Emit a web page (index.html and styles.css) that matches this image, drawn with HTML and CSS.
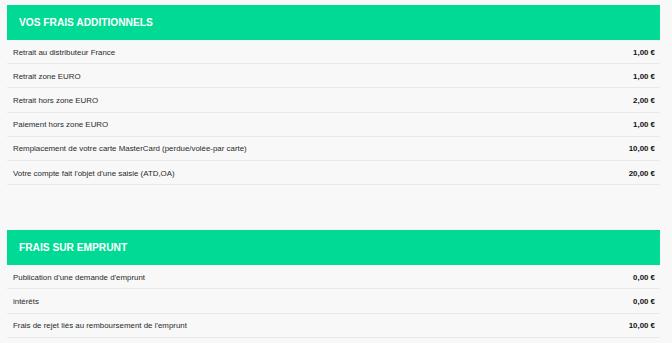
FILE: index.html
```html
<!DOCTYPE html>
<html lang="fr">
<head>
<meta charset="utf-8">
<link rel="stylesheet" href="styles.css">
</head>
<body>
<div class="page">
  <section class="block">
    <h2 class="head">VOS FRAIS ADDITIONNELS</h2>
    <div class="row"><span>Retrait au distributeur France</span><b>1,00 €</b></div>
    <div class="row"><span>Retrait zone EURO</span><b>1,00 €</b></div>
    <div class="row"><span>Retrait hors zone EURO</span><b>2,00 €</b></div>
    <div class="row"><span>Paiement hors zone EURO</span><b>1,00 €</b></div>
    <div class="row"><span>Remplacement de votre carte MasterCard (perdue/volée-par carte)</span><b>10,00 €</b></div>
    <div class="row"><span>Votre compte fait l'objet d'une saisie (ATD,OA)</span><b>20,00 €</b></div>
  </section>
  <section class="block">
    <h2 class="head">FRAIS SUR EMPRUNT</h2>
    <div class="row"><span>Publication d'une demande d'emprunt</span><b>0,00 €</b></div>
    <div class="row"><span>intérêts</span><b>0,00 €</b></div>
    <div class="row"><span>Frais de rejet liés au remboursement de l'emprunt</span><b>10,00 €</b></div>
  </section>
</div>
</body>
</html>
```
FILE: styles.css
```css
html, body {
  margin: 0;
  padding: 0;
  background: #f8f8f8;
}
body {
  font-family: "Liberation Sans", Arial, sans-serif;
  color: #2a2a2a;
}
.page {
  display: flex;
  flex-direction: column;
  gap: 45px;
  padding: 5px 12px 0 7px;
}
.block {
  display: flex;
  flex-direction: column;
}
.head {
  margin: 0;
  height: 35px;
  display: flex;
  align-items: center;
  padding-left: 12px;
  background: #00da94;
  color: #fff;
  font-size: 10.2px;
  font-weight: bold;
}
.row {
  display: flex;
  justify-content: space-between;
  align-items: center;
  box-sizing: border-box;
  height: 24.2px;
  padding: 1px 5px 0 6px;
  border-bottom: 1px solid #e9e9e9;
  font-size: 7.9px;
}
.row b {
  font-weight: bold;
  color: #111;
}
```
